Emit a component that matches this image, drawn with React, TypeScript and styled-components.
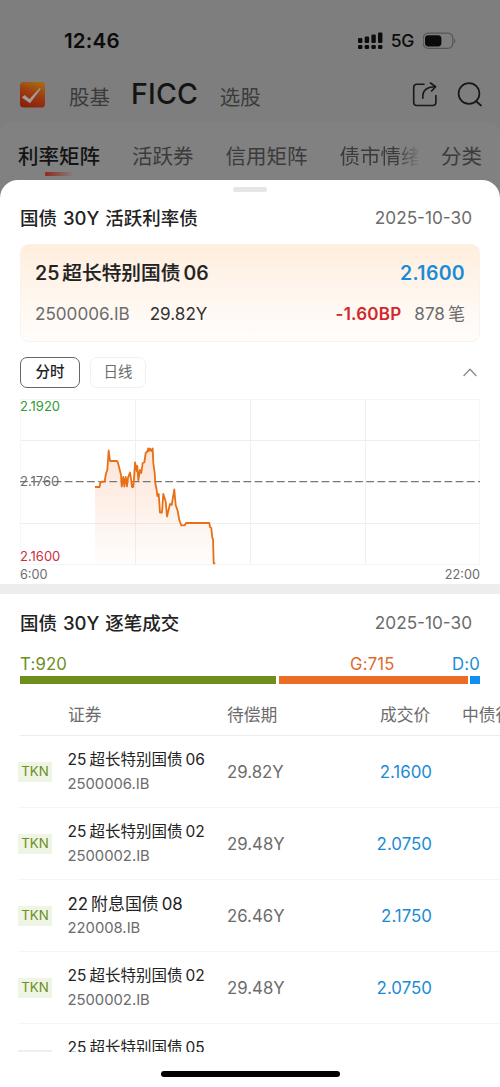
import React from 'react';
import styled, { createGlobalStyle, css } from 'styled-components';

const GlobalStyle = createGlobalStyle`
  *, *::before, *::after { box-sizing: border-box; }
  body { margin: 0; background: #fff; }
`;

const ink = '#222';
const grey = '#6c6c6c';
const blue = '#1c8bd6';

const Screen = styled.div`
  width: 500px;
  height: 1087px;
  overflow: hidden;
  display: flex;
  flex-direction: column;
  background: #7e7e7e;
  font-family: Inter, 'Noto Sans CJK SC', sans-serif;
  color: ${ink};
  white-space: nowrap;
  line-height: 1;
`;

const StatusBar = styled.div`
  height: 68px;
  flex: none;
  padding: 14px 43px 0 64px;
  display: flex;
  align-items: center;
  color: #0b0b0b;
`;

const Clock = styled.span`
  font-size: 20.5px;
  font-weight: 600;
  letter-spacing: 0.2px;
  margin-right: auto;
`;

const Network = styled.span`
  font-size: 17.5px;
  font-weight: 500;
  letter-spacing: -0.3px;
  margin: 0 9px 0 8px;
`;

const AppHeader = styled.div`
  height: 54px;
  flex: none;
  padding: 0 17px 0 20px;
  display: flex;
  align-items: center;
`;

const HeaderTab = styled.span<{ $active?: boolean }>`
  font-size: 20.5px;
  font-weight: 400;
  color: #3b3b3b;
  padding-top: 6px;
  ${(p) =>
    p.$active &&
    css`
      font-size: 28.5px;
      font-weight: 500;
      color: #141414;
      letter-spacing: 0.2px;
      padding: 0 0 1px;
      margin: 0 21.5px 0 21px;
    `}
`;

const HeaderActions = styled.div`
  margin-left: auto;
  display: flex;
  align-items: center;
  gap: 19px;
`;

const TabStrip = styled.div`
  height: 58px;
  flex: none;
  padding: 0 18px;
  display: flex;
  gap: 32px;
  background: #818181;
  border-radius: 12px 12px 0 0;
`;

const StripTab = styled.div<{ $active?: boolean; $fade?: boolean }>`
  display: flex;
  flex-direction: column;
  padding-top: 25px;
  font-size: 20.5px;
  font-weight: ${(p) => (p.$active ? 500 : 400)};
  color: ${(p) => (p.$active ? '#131313' : '#3b3b3b')};
  &:last-child { margin-left: auto; }
  ${(p) =>
    p.$fade &&
    css`
      width: 78px;
      margin-right: -20px;
      overflow: hidden;
      mask-image: linear-gradient(90deg, #000 72%, transparent 104%);
    `}
`;

const ActiveMark = styled.span`
  width: 29px;
  height: 4px;
  margin: 4px 0 0 27px;
  border-radius: 1px;
  background: linear-gradient(90deg, #92291a, rgba(146, 41, 26, 0));
`;

const Backdrop = styled.div`
  background: #818181;
  flex: 1;
  min-height: 0;
  display: flex;
  flex-direction: column;
`;

const Sheet = styled.div`
  flex: 1;
  min-height: 0;
  display: flex;
  flex-direction: column;
  background: #fff;
  border-radius: 18px 18px 0 0;
`;

const Handle = styled.div`
  width: 34px;
  height: 5px;
  margin: 7px auto 0;
  border-radius: 3px;
  background: #e6e6e6;
  flex: none;
`;

const SectionHeader = styled.div<{ $height: number }>`
  height: ${(p) => p.$height}px;
  flex: none;
  padding: 0 28px 0 20px;
  display: flex;
  align-items: center;
  justify-content: space-between;
`;

const SectionTitle = styled.h2`
  margin: 0;
  font-size: 18.5px;
  font-weight: 500;
  word-spacing: 1px;
`;

const DateLabel = styled.span`
  font-size: 17.2px;
  color: ${grey};
`;

const BondCard = styled.div`
  height: 98px;
  flex: none;
  margin: 0 20px;
  padding: 9px 14px 9px;
  border-radius: 9px;
  border: 1px solid #faf3ec;
  background: linear-gradient(180deg, #ffeedd 0%, #fff6ee 50%, #fffdfb 100%);
`;

const CardRow = styled.div`
  height: 40px;
  display: flex;
  align-items: center;
`;

const BondName = styled.span<{ $size?: number; $strong?: boolean }>`
  display: flex;
  align-items: center;
  gap: 3px;
  height: 16px;
  font-size: ${(p) => p.$size ?? 15.5}px;
  font-weight: ${(p) => (p.$strong ? 500 : 400)};
  -webkit-text-stroke: ${(p) => (p.$strong ? '0.2px' : '0')};
`;

const CardPrice = styled.span`
  margin-left: auto;
  font-size: 19.5px;
  font-weight: 600;
  letter-spacing: 0.3px;
  color: ${blue};
`;

const CardText = styled.span<{ $dark?: boolean }>`
  display: flex;
  align-items: center;
  gap: 3px;
  font-size: 17.1px;
  color: ${(p) => (p.$dark ? '#333' : grey)};
`;

const CardCode = styled(CardText)`
  margin-right: 20px;
`;

const Change = styled.span`
  margin: 0 13px 0 auto;
  font-size: 17px;
  font-weight: 600;
  letter-spacing: 0.2px;
  color: #d2272d;
`;

const ChartTabs = styled.div`
  height: 57px;
  flex: none;
  padding: 3px 23px 0 20px;
  display: flex;
  align-items: center;
  gap: 10px;
`;

const ChartTab = styled.button<{ $active?: boolean }>`
  width: ${(p) => (p.$active ? 60 : 56)}px;
  height: 31px;
  padding: 1px 0 0;
  border-radius: 7px;
  border: 1px solid ${(p) => (p.$active ? '#666' : '#f1f1f1')};
  background: #fff;
  font: inherit;
  font-size: 14.5px;
  font-weight: ${(p) => (p.$active ? 500 : 400)};
  color: ${(p) => (p.$active ? ink : grey)};
`;

const ChartArea = styled.div`
  display: grid;
  height: 167px;
  flex: none;
  margin: 0 20px;
  > * { grid-area: 1 / 1; }
`;

const PriceScale = styled.div`
  display: flex;
  flex-direction: column;
  justify-content: space-between;
  padding: 1px 0 3px;
  font-size: 13px;
`;

const ScaleLabel = styled.span<{ $color: string }>`
  color: ${(p) => p.$color};
`;

const TimeScale = styled.div`
  height: 18px;
  flex: none;
  margin: 0 20px;
  padding-top: 1px;
  display: flex;
  align-items: center;
  justify-content: space-between;
  font-size: 12.7px;
  color: ${grey};
`;

const Divider = styled.div`
  height: 10px;
  flex: none;
  background: #ededed;
`;

const Totals = styled.div`
  flex: none;
  height: 24px;
  margin: 0 20px;
  display: grid;
  grid-template-columns: 330px 1fr auto;
  align-items: center;
  font-size: 16.7px;
  letter-spacing: 0.2px;
`;

const Total = styled.span<{ $color: string }>`
  color: ${(p) => p.$color};
`;

const RatioBar = styled.div`
  flex: none;
  height: 8px;
  margin: 0 20px;
  display: flex;
  gap: 2.5px;
`;

const Segment = styled.div<{ $color: string; $width: number }>`
  width: ${(p) => p.$width}px;
  background: ${(p) => p.$color};
`;

const TableHead = styled.div`
  flex: none;
  width: 580px;
  height: 52px;
  margin-left: 20px;
  padding: 12px 0 0 48px;
  display: grid;
  grid-template-columns: 159px 153px 82px 1fr;
  align-items: center;
  border-bottom: 1px solid #ececec;
  font-size: 16.8px;
  color: ${grey};
`;

const TableBody = styled.div`
  height: 316px;
  flex: none;
  overflow: hidden;
`;

const TradeRow = styled.div`
  height: 72px;
  margin-left: 18px;
  padding-top: 1px;
  display: grid;
  grid-template-columns: 49.5px 159.5px 100px 105px;
  align-items: center;
  border-bottom: 1px solid #f5f5f5;
`;

const SideBadge = styled.span<{ $muted?: boolean }>`
  width: 34px;
  height: 20px;
  display: flex;
  align-items: center;
  justify-content: center;
  background: ${(p) => (p.$muted ? '#eee' : '#eff5e5')};
  color: #6c8e22;
  font-size: 13.3px;
  font-weight: 400;
`;

const Security = styled.div`
  display: flex;
  flex-direction: column;
  gap: 9px;
`;

const Code = styled.span`
  font-size: 14.8px;
  color: ${grey};
`;

const Term = styled.span`
  font-size: 16.8px;
  color: ${grey};
`;

const Price = styled.span`
  justify-self: end;
  font-size: 16.9px;
  color: ${blue};
`;

const HomeBar = styled.div`
  width: 179px;
  height: 6px;
  flex: none;
  margin: 19px auto 0;
  border-radius: 3px;
  background: #000;
`;

const LogoSvg = styled.svg`
  margin-right: 24px;
`;

const ChevronSvg = styled.svg`
  margin-left: auto;
`;

const SignalIcon = () => (
  <svg width="25" height="18" viewBox="0 0 25 18" fill="#0b0b0b">
    <rect x="0" y="6" width="4.4" height="5" rx="1.2" />
    <rect x="6.7" y="4.5" width="4.4" height="6.5" rx="1.2" />
    <rect x="13.4" y="2.5" width="4.4" height="8.5" rx="1.2" />
    <rect x="20" y="0.5" width="4.4" height="10.5" rx="1.2" />
    <rect x="0" y="13" width="4.4" height="4" rx="1.2" />
    <rect x="6.7" y="13" width="4.4" height="4" rx="1.2" />
    <rect x="13.4" y="13" width="4.4" height="4" rx="1.2" />
    <rect x="20" y="13" width="4.4" height="4" rx="1.2" />
  </svg>
);

const BatteryIcon = () => (
  <svg width="34" height="18" viewBox="0 0 34 18">
    <rect x="0.2" y="1.2" width="29.6" height="15.2" rx="5" fill="none" stroke="#555" strokeWidth="1.2" />
    <rect x="2" y="3.2" width="16.4" height="11.2" rx="3.4" fill="#0a0a0a" />
    <path d="M31.2 6.6c1.6.6 1.6 4 0 4.6z" fill="#555" />
  </svg>
);

const LogoIcon = () => (
  <LogoSvg width="25" height="26" viewBox="0 0 25 26">
    <defs>
      <linearGradient id="logo" x1="0.7" y1="0" x2="0.35" y2="1">
        <stop offset="0" stopColor="#a66a13" />
        <stop offset="0.45" stopColor="#9c3d10" />
        <stop offset="1" stopColor="#8a200f" />
      </linearGradient>
    </defs>
    <rect width="25" height="25.5" rx="3.5" fill="url(#logo)" />
    <path d="M1.8 15.5 4.6 13l4.8 4.1L19.8 6l1 .8L10 21.3z" fill="#a39b98" />
  </LogoSvg>
);

const ShareIcon = () => (
  <svg width="26" height="26" viewBox="0 0 26 26" fill="none" stroke="#181818" strokeWidth="1.6" strokeLinecap="round" strokeLinejoin="round">
    <path d="M12 2.2H5Q1.7 2.2 1.7 5.5v14.7q0 3.3 3.3 3.3h15.6q3.3 0 3.3-3.3v-6.7" />
    <path d="M10.8 16.3V13.5Q11.3 5 23 4.7" />
    <path d="M18.4 1 23.6 4.7 19.6 9" />
  </svg>
);

const SearchIcon = () => (
  <svg width="26" height="26" viewBox="0 0 26 26" fill="none" stroke="#181818" strokeWidth="1.7" strokeLinecap="round">
    <circle cx="12" cy="11.5" r="10.4" />
    <path d="M18.8 19 24 23.5" />
  </svg>
);

const ChevronUp = () => (
  <ChevronSvg width="14" height="9" viewBox="0 0 14 9" fill="none" stroke="#8a8a8a" strokeWidth="1.3">
    <path d="M0.6 8 7 1.3 13.4 8" />
  </ChevronSvg>
);

const LINE =
  '95,487 99.5,487 100.5,482 104.7,481.5 106,473.5 107.3,470 108.7,450.5 110,461 117,461 118,463 119.3,468 121,475 121.7,486.5 123.3,477 124.3,486.5 125.7,477 127,486.5 128,477.5 130,472.5 131,479 132,487 133.3,487 134.3,474 135,462.5 136.7,471 137.3,466 138.3,480 140,470 141.3,473 142.7,463 144.3,462.5 145.7,453 147.7,451 148,448.5 149,451 150,448.5 151.5,451 152.7,448.5 153.3,463 154.7,473 155.3,483 156.7,490 157.3,496 158.7,494 160,512.5 162,512.5 163.3,494 165.7,501.5 167,516.5 170,504 171.7,505 174.3,489.5 175.7,505 177.7,511 179.3,520 181.3,525.3 184.7,525.3 186,523 209.3,523 210,527 211.3,528 212.3,538 213,539 213.7,563.3 215.3,563.3';

const PriceChart = () => (
  <svg width="460" height="167" viewBox="20 399 460 167">
    <defs>
      <linearGradient id="area" x1="0" y1="0" x2="0" y2="1">
        <stop offset="0" stopColor="#f06a1c" stopOpacity="0.18" />
        <stop offset="1" stopColor="#f06a1c" stopOpacity="0.01" />
      </linearGradient>
    </defs>
    <path d="M20 440.5H480M20 523.5H480" stroke="#eee" />
    <path d="M20 399.5H480M20 564.5H480M20.5 399V565M479.5 399V565" stroke="#f6f6f6" />
    <path d="M135.5 399V565M250.5 399V565M365.5 399V565" stroke="#f0f0f0" />
    <polygon points={`${LINE} 215.3,565 95,565`} fill="url(#area)" />
    <path d="M20 481.6H480" stroke="#777" strokeWidth="1.2" strokeDasharray="7.8 3.37" />
    <polyline points={LINE} fill="none" stroke="#e96f16" strokeWidth="1.8" strokeLinejoin="round" />
  </svg>
);

const trades = [
  { year: '25', name: '超长特别国债', no: '06', code: '2500006.IB', term: '29.82Y', price: '2.1600', size: 15.5 },
  { year: '25', name: '超长特别国债', no: '02', code: '2500002.IB', term: '29.48Y', price: '2.0750', size: 15.5 },
  { year: '22', name: '附息国债', no: '08', code: '220008.IB', term: '26.46Y', price: '2.1750', size: 16.9 },
  { year: '25', name: '超长特别国债', no: '02', code: '2500002.IB', term: '29.48Y', price: '2.0750', size: 15.5 },
  { year: '25', name: '超长特别国债', no: '05', code: '', term: '', price: '', size: 15.5 },
];

export default function App() {
  return (
    <Screen>
      <GlobalStyle />
      <StatusBar>
        <Clock>12:46</Clock>
        <SignalIcon />
        <Network>5G</Network>
        <BatteryIcon />
      </StatusBar>
      <AppHeader>
        <LogoIcon />
        <HeaderTab>股基</HeaderTab>
        <HeaderTab $active>FICC</HeaderTab>
        <HeaderTab>选股</HeaderTab>
        <HeaderActions>
          <ShareIcon />
          <SearchIcon />
        </HeaderActions>
      </AppHeader>
      <TabStrip>
        <StripTab $active>
          利率矩阵
          <ActiveMark />
        </StripTab>
        <StripTab>活跃券</StripTab>
        <StripTab>信用矩阵</StripTab>
        <StripTab $fade>债市情绪</StripTab>
        <StripTab>分类</StripTab>
      </TabStrip>
      <Backdrop>
        <Sheet>
          <Handle />
          <SectionHeader $height={52}>
            <SectionTitle>国债 30Y 活跃利率债</SectionTitle>
            <DateLabel>2025-10-30</DateLabel>
          </SectionHeader>
          <BondCard>
            <CardRow>
              <BondName $size={19.7} $strong>
                <span>25</span>
                <span>超长特别国债</span>
                <span>06</span>
              </BondName>
              <CardPrice>2.1600</CardPrice>
            </CardRow>
            <CardRow>
              <CardCode>2500006.IB</CardCode>
              <CardText $dark>29.82Y</CardText>
              <Change>-1.60BP</Change>
              <CardText>
                <span>878</span>
                <span>笔</span>
              </CardText>
            </CardRow>
          </BondCard>
          <ChartTabs>
            <ChartTab $active>分时</ChartTab>
            <ChartTab>日线</ChartTab>
            <ChevronUp />
          </ChartTabs>
          <ChartArea>
            <PriceChart />
            <PriceScale>
              <ScaleLabel $color="#2f9a35">2.1920</ScaleLabel>
              <ScaleLabel $color={grey}>2.1760</ScaleLabel>
              <ScaleLabel $color="#cc2f3c">2.1600</ScaleLabel>
            </PriceScale>
          </ChartArea>
          <TimeScale>
            <span>6:00</span>
            <span>22:00</span>
          </TimeScale>
          <Divider />
          <SectionHeader $height={58}>
            <SectionTitle>国债 30Y 逐笔成交</SectionTitle>
            <DateLabel>2025-10-30</DateLabel>
          </SectionHeader>
          <Totals>
            <Total $color="#6c8e22">T:920</Total>
            <Total $color="#e2692c">G:715</Total>
            <Total $color={blue}>D:0</Total>
          </Totals>
          <RatioBar>
            <Segment $color="#6e8e1d" $width={256} />
            <Segment $color="#eb6c25" $width={189} />
            <Segment $color="#148df0" $width={10} />
          </RatioBar>
          <TableHead>
            <span>证券</span>
            <span>待偿期</span>
            <span>成交价</span>
            <span>中债行权</span>
          </TableHead>
          <TableBody>
            {trades.map((t, i) => (
              <TradeRow key={i}>
                <SideBadge $muted={!t.code}>{t.code ? 'TKN' : ''}</SideBadge>
                <Security>
                  <BondName $size={t.size}>
                    <span>{t.year}</span>
                    <span>{t.name}</span>
                    <span>{t.no}</span>
                  </BondName>
                  <Code>{t.code || '\u00a0'}</Code>
                </Security>
                <Term>{t.term}</Term>
                <Price>{t.price}</Price>
              </TradeRow>
            ))}
          </TableBody>
          <HomeBar />
        </Sheet>
      </Backdrop>
    </Screen>
  );
}
